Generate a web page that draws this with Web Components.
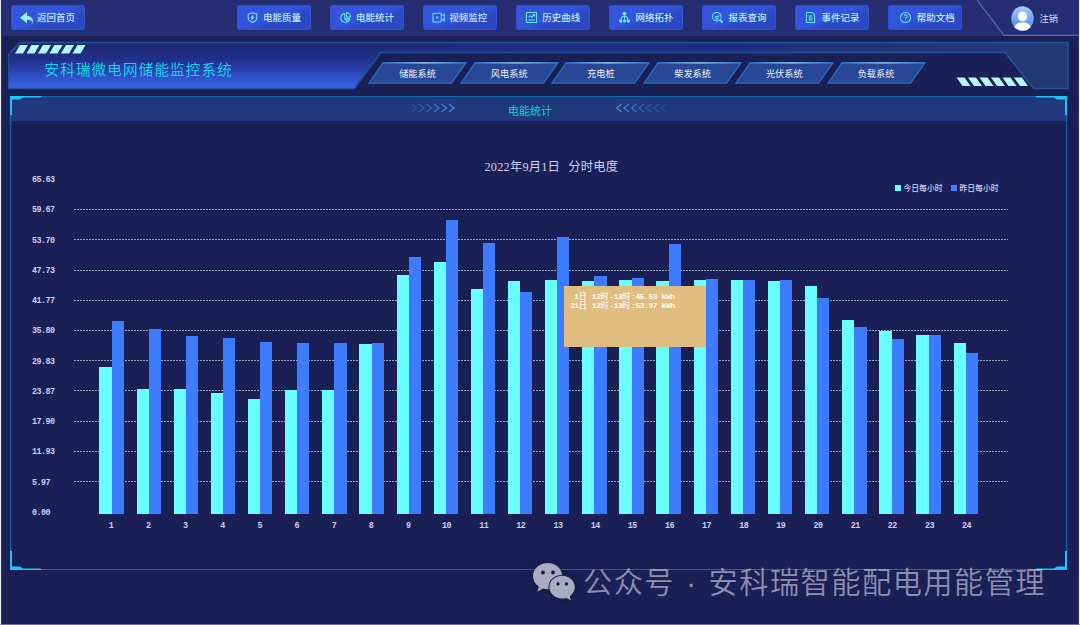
<!DOCTYPE html>
<html lang="zh-CN">
<head>
<meta charset="utf-8">
<title>安科瑞微电网储能监控系统</title>
<style>
  body {
    margin: 0;
    width: 1080px;
    height: 625px;
    overflow: hidden;
    background: #1a2055;
    font-family: "Noto Sans CJK SC", sans-serif;
    color: #fff;
  }
</style>
</head>
<body>
<monitor-app></monitor-app>
<script>
const html = String.raw;

const ICONS = {
  back: `<path d="M6.5 1 0 6.3l6.5 5V8.1c3 0 5 .8 5.3 3.9C13 7.5 10.500 4.500 6.500 4.300z" fill="#8ff4ff" stroke="none"/>`,
  shield: `<path d="M6 .8 10.700 2.200v4.200c0 2.500-2 4.100-4.700 5-2.700-.9-4.700-2.500-4.700-5V2.200z"/><path d="M6.800 2.600 3.600 6.500h1.700L4.800 9.600l3.500-4.300H6.300z" fill="#8fe9ff" stroke="none"/>`,
  pie: `<path d="M5.200 1.700A4.800 4.800 0 1 0 10.500 7.500H5.200zM7.100.9v4.500h4.400C11.300 2.600 9.600 1 7.100.9zM5.500 7.300l2.700 3"/>`,
  video: `<rect x="0" y="1.300" width="9" height="9.500" rx=".8"/><path d="M9 4.500 12.300 2.600v7L9 7.700"/><path d="M3.700 4.300v3.400l2.700-1.700z" fill="#6deaff" stroke="none"/>`,
  curve: `<rect x=".5" y=".5" width="11" height="11" rx=".5"/><path d="m2.700 6 2-2 1.600 1.700L9.300 3M9.400 5V2.900H7.200M2.800 8.700h6.500"/>`,
  topo: `<path d="M6 3v6M6 4.500C3 4.800 2.300 6.500 2.200 9M6 4.500c3 .3 3.700 2 3.800 4.500"/><g fill="#6deaff" stroke="none"><circle cx="6" cy="1.800" r="2"/><circle cx="1.900" cy="9.800" r="1.900"/><circle cx="6" cy="9.800" r="1.700"/><circle cx="10.100" cy="9.800" r="1.900"/></g>`,
  search: `<circle cx="5.300" cy="5.200" r="4.700"/><path d="m8.600 8.500 3 3" stroke-width="1.900"/><path d="m2.900 6.300 1.600-1.800 1.300 1.200 2-2M3.500 7.500h3.600"/>`,
  record: `<path d="M1.600.5h6.300L10.500 3.100v8.400H1.600zM3.900 4.300h4M3.900 6.500h4.400M3.900 8.700h4.400"/>`,
  help: `<circle cx="6" cy="6" r="5.500"/><path d="M4.300 4.800C4.300 2.400 7.800 2.500 7.800 4.500 7.800 5.900 6 5.800 6 7.400M6 8.300v1.100"/>`,
};

class NavButton extends HTMLElement {
  constructor() {
    super();
    this.attachShadow({ mode: "open" });
    const icon = this.getAttribute("icon");
    const size = icon === "back" ? 13 : 11;
    this.shadowRoot.innerHTML = html`
      <style>
        :host {
          display: flex;
          align-items: center;
          box-sizing: border-box;
          width: 74px;
          height: 25px;
          padding-left: 9px;
          gap: 5.500px;
          border: 1px solid #3450cb;
          border-radius: 2px;
          background: linear-gradient(160deg, #3355dc 0 47%, #2b49c2 64%);
          color: #b9e9ff;
          font-size: 9.500px;
          font-weight: 500;
          line-height: 14px;
          white-space: nowrap;
        }
        :host([icon="back"]) { padding-left: 8px; gap: 4px; }
        svg { flex: none; overflow: visible; fill: none; stroke: #6deaff; stroke-width: 1.100; }
        span { margin-top: -1px; }
      </style>
      <svg width="${size}" height="${size}" viewBox="0 0 12 12">${ICONS[icon]}</svg>
      <span><slot></slot></span>
    `;
  }
}
customElements.define("nav-button", NavButton);

class TopBar extends HTMLElement {
  constructor() {
    super();
    this.attachShadow({ mode: "open" });
    this.shadowRoot.innerHTML = html`
      <style>
        :host {
          display: flex;
          box-sizing: border-box;
          height: 36px;
          padding: 5px 0 0 10px;
          background: #252e72;
        }
        nav { display: flex; gap: 19.100px; margin-left: 151.500px; }
        nav-button[icon="help"] { padding-left: 11px; }
        .user {
          display: grid;
          width: 102px;
          height: 36px;
          margin: -5px 0 0 auto;
        }
        .user > * { grid-area: 1 / 1; }
        .info {
          display: flex;
          align-items: center;
          gap: 5.500px;
          padding: 1px 0 0 34px;
          font-size: 9.300px;
          color: #d8dcf2;
        }
        .info span { margin-top: -1px; }
      </style>
      <nav-button icon="back">返回首页</nav-button>
      <nav>
        <nav-button icon="shield">电能质量</nav-button>
        <nav-button icon="pie">电能统计</nav-button>
        <nav-button icon="video">视频监控</nav-button>
        <nav-button icon="curve">历史曲线</nav-button>
        <nav-button icon="topo">网络拓扑</nav-button>
        <nav-button icon="search">报表查询</nav-button>
        <nav-button icon="record">事件记录</nav-button>
        <nav-button icon="help">帮助文档</nav-button>
      </nav>
      <div class="user">
        <svg width="102" height="36" fill="none" stroke="#4a6fb4" stroke-width="1.200"><path d="M0 0 27 35.400H102"/></svg>
        <div class="info">
          <svg width="23" height="25" viewBox="0 0 23 25">
            <defs>
              <linearGradient id="a" x2="0" y2="1"><stop stop-color="#a5cdfb"/><stop offset="1" stop-color="#4b80ed"/></linearGradient>
              <clipPath id="c"><ellipse cx="11.500" cy="12.500" rx="11.200" ry="12.200"/></clipPath>
            </defs>
            <g clip-path="url(#c)">
              <path fill="url(#a)" d="M0 0h23v25H0z"/>
              <ellipse cx="11.500" cy="10.500" rx="4.600" ry="5" fill="#fff"/>
              <path d="M2.500 25c0-5 2.500-7.500 6.500-8.500h5c4 1 6.500 3.500 6.500 8.500z" fill="#fff"/>
            </g>
          </svg>
          <span>注销</span>
        </div>
      </div>
    `;
  }
}
customElements.define("top-bar", TopBar);

class SystemTab extends HTMLElement {
  constructor() {
    super();
    this.attachShadow({ mode: "open" });
    this.shadowRoot.innerHTML = html`
      <style>
        :host { display: grid; width: 99px; height: 22px; }
        svg, span { grid-area: 1 / 1; }
        span {
          place-self: center;
          margin-top: -1px;
          font-size: 9.200px;
          line-height: 14px;
          color: #eef1fd;
        }
      </style>
      <svg width="99" height="22">
        <defs>
          <linearGradient id="top"><stop stop-color="#2d74c4"/><stop offset=".5" stop-color="#a4cdf2"/><stop offset="1" stop-color="#2d74c4"/></linearGradient>
        </defs>
        <path d="M15 .8H98L83.500 21.200H1z" fill="#264896" stroke="#2b70bd" stroke-width="1.300"/>
        <path d="M15 .2H98V1.500H15z" fill="url(#top)"/>
      </svg>
      <span><slot></slot></span>
    `;
  }
}
customElements.define("system-tab", SystemTab);

class SystemHeader extends HTMLElement {
  constructor() {
    super();
    this.attachShadow({ mode: "open" });
    const slants = (x, y, top, bottom) =>
      Array.from({ length: 6 }, (_, i) => {
        const l = x + i * 11.5;
        return `M${l + top} ${y}h8L${l + bottom + 8} ${y + 8.5}h-8z`;
      }).join("");
    this.shadowRoot.innerHTML = html`
      <style>
        :host { display: grid; width: 1062px; height: 49px; margin: 5px 0 0 6px; }
        .frame, .row { grid-area: 1 / 1; }
        .row { display: flex; }
        h1 {
          width: 323.500px;
          margin: 16px 0 0 36.500px;
          font-size: 14.500px;
          font-weight: 350;
          line-height: 24px;
          letter-spacing: 1.200px;
          color: #12dcf3;
          white-space: nowrap;
        }
        .tabs { display: flex; padding-top: 21px; }
        system-tab { margin-right: -7.300px; }
      </style>
      <svg class="frame" width="1062" height="49">
        <defs>
          <linearGradient id="v" x2="0" y2="1"><stop stop-color="#1e2870"/><stop offset=".4" stop-color="#20318e"/><stop offset="1" stop-color="#3a66ee"/></linearGradient>
          <linearGradient id="h" gradientUnits="userSpaceOnUse" x1="370" x2="1040" y1="0" y2="0"><stop stop-color="#1d2c84" stop-opacity="0"/><stop offset=".5" stop-color="#1e2c82"/><stop offset=".75" stop-color="#213372"/><stop offset="1" stop-color="#233a74"/></linearGradient>
        </defs>
        <path d="M.5 13.500 12 1.500H1060V47.500H1025.500L997 11.500H372.500L346.500 47.500H.5z" fill="url(#v)"/>
        <path d="M.5 13.500 12 1.500H1060V47.500H1025.500L997 11.500H372.500L346.500 47.500H.5z" fill="url(#h)" stroke="#225398" stroke-width="1.500"/>
        <path d="${slants(7, 4, 5, 0)}${slants(948.5, 36.5, 0, 6)}" fill="#b3f8ff"/>
      </svg>
      <div class="row">
        <h1>安科瑞微电网储能监控系统</h1>
        <div class="tabs">
          <system-tab>储能系统</system-tab>
          <system-tab>风电系统</system-tab>
          <system-tab>充电桩</system-tab>
          <system-tab>柴发系统</system-tab>
          <system-tab>光伏系统</system-tab>
          <system-tab>负载系统</system-tab>
        </div>
      </div>
    `;
  }
}
customElements.define("system-header", SystemHeader);

class FramePanel extends HTMLElement {
  constructor() {
    super();
    this.attachShadow({ mode: "open" });
    const chevrons = (count, dir) =>
      Array.from({ length: count }, (_, i) => {
        const x = i * 7.5 + 0.5;
        const d = dir > 0 ? `M${x} 1l5 4-5 4` : `M${x + 5} 1l-5 4 5 4`;
        const strength = dir > 0 ? (i + 2) / (count + 1) : (count - i) / count;
        return `<path d="${d}" opacity="${strength}"/>`;
      }).join("");
    this.shadowRoot.innerHTML = html`
      <style>
        :host {
          display: block;
          position: relative;
          box-sizing: border-box;
          width: 1057px;
          height: 474px;
          margin: 6px 0 0 8px;
          border: 1px solid #1767a3;
        }
        header {
          display: grid;
          grid-template-columns: 400px 50px 138px 69px;
          height: 24px;
          background: #1f397c;
        }
        header svg { margin-top: 6px; fill: none; stroke: #3e88dd; stroke-width: 1.500; }
        h2 {
          margin: 4px 0 0 0;
          font-size: 11px;
          font-weight: 400;
          line-height: 18px;
          text-align: center;
          color: #10d0df;
        }
        .corner { position: absolute; fill: #1cc6fa; }
        .tl { left: -1px; top: -1px; }
        .tr { right: -1px; top: -1px; transform: scaleX(-1); }
        .bl { left: -1px; bottom: -1px; transform: scaleY(-1); }
        .br { right: -1px; bottom: -1px; transform: scale(-1); }
      </style>
      <header>
        <i></i>
        <svg width="48" height="10">${chevrons(6, 1)}</svg>
        <h2><slot name="title"></slot></h2>
        <svg width="54" height="10" style="margin-left:17px">${chevrons(7, -1)}</svg>
      </header>
      <slot></slot>
      ${["tl", "tr", "bl", "br"]
        .map((c) => `<svg class="corner ${c}" width="34" height="20"><path d="M0 0H32L30.500 1.500H13L10 3.500H2V19H0z"/></svg>`)
        .join("")}
    `;
  }
}
customElements.define("frame-panel", FramePanel);

// hourly kWh
const TODAY = [
  28.65, 24.3, 24.3, 23.52, 22.3, 24.1, 24.16, 33.05, 46.52, 49.2, 43.79, 45.45,
  45.53, 45.45, 45.59, 45.35, 45.59, 45.59, 45.35, 44.47, 37.77, 35.74, 34.94, 33.34,
];
const YESTERDAY = [
  37.64, 36.02, 34.71, 34.26, 33.44, 33.28, 33.28, 33.24, 50.18, 57.27, 52.81, 43.2,
  53.97, 46.37, 45.98, 52.68, 45.84, 45.59, 45.68, 42.13, 36.47, 34.12, 34.86, 31.39,
];
const TICKS = ["65.63", "59.67", "53.70", "47.73", "41.77", "35.80", "29.83", "23.87", "17.90", "11.93", "5.97", "0.00"];
const PX_PER_KWH = 5.12;

class HourlyChart extends HTMLElement {
  constructor() {
    super();
    this.attachShadow({ mode: "open" });
    const groups = TODAY.map(
      (v, i) => html`<div class="group"><i style="height:${v * PX_PER_KWH}px"></i><i class="old" style="height:${YESTERDAY[i] * PX_PER_KWH}px"></i></div>`
    ).join("");
    this.shadowRoot.innerHTML = html`
      <style>
        :host { display: block; color: #d0cff2; }
        h3 {
          margin: 0;
          padding: 37px 0 0 473.500px;
          font: 400 12.300px/18px "Liberation Serif", "Noto Sans CJK SC", serif;
          letter-spacing: .2px;
          word-spacing: 5px;
        }
        .legend {
          display: flex;
          align-items: center;
          height: 12px;
          margin: 6px 0 0 883.500px;
          font-size: 7.800px;
          line-height: 12px;
          font-weight: 500;
        }
        .legend i { width: 6px; height: 6px; margin-right: 3px; background: #69ffff; }
        .legend span { width: 47px; white-space: nowrap; }
        .legend .old { background: #3d7bff; }
        .body { display: grid; grid-template-columns: 42px 934px; margin: -19px 0 0 21px; }
        .ticks, .hours { font: 700 8.400px/10px "Liberation Mono", monospace; letter-spacing: -.52px; }
        .ticks { height: 339px; }
        .ticks div { height: 30.250px; }
        .plot {
          position: relative;
          display: grid;
          height: 338.500px;
        }
        .lines, .bars { grid-area: 1 / 1; }
        .lines { padding-top: 5px; }
        .lines div {
          height: 30.200px;
          background: repeating-linear-gradient(90deg, #8baabd 0 2px, transparent 2px 3px) bottom / 100% 1px no-repeat;
        }
        .bars, .hours { display: flex; margin-left: 19px; width: 891.200px; }
        .bars { align-items: flex-end; }
        .group { flex: 1; display: flex; align-items: flex-end; justify-content: center; }
        .group i { width: 12.200px; background: #69ffff; }
        .group .old { background: #3d7bff; }
        .hours { grid-column: 2; margin-top: 6.500px; }
        .hours div { flex: 1; text-align: center; text-indent: 1.500px; }
        .hours div:nth-child(-n+9) { text-indent: -1px; }
        .tip {
          position: absolute;
          left: 490px;
          top: 111px;
          box-sizing: border-box;
          width: 142px;
          height: 61px;
          padding: 6px 0 0 6px;
          background: #dfbc80;
          color: #fffaf0;
          font: 700 8px/9.400px "Liberation Mono", "Noto Sans CJK SC", monospace;
          letter-spacing: -.44px;
          white-space: pre;
        }
        .tip div { height: 9.400px; }
        .tip b { font-size: 8px; font-weight: 500; line-height: 1; letter-spacing: .7px; }
      </style>
      <h3>2022年9月1日 分时电度</h3>
      <div class="legend">
        <i></i><span>今日每小时</span><i class="old"></i><span>昨日每小时</span>
      </div>
      <div class="body">
        <div class="ticks">${TICKS.map((t) => `<div>${t}</div>`).join("")}</div>
        <div class="plot">
          <div class="lines">${"<div></div>".repeat(10)}</div>
          <div class="bars">${groups}</div>
          <div class="tip"><div> 1<b>日</b> 12<b>时</b>-13<b>时</b>:45.53 kWh</div><div>31<b>日</b> 12<b>时</b>-13<b>时</b>:53.97 kWh</div></div>
        </div>
        <div class="hours">${TODAY.map((_, i) => `<div>${i + 1}</div>`).join("")}</div>
      </div>
    `;
  }
}
customElements.define("hourly-chart", HourlyChart);

class AccountMark extends HTMLElement {
  constructor() {
    super();
    this.attachShadow({ mode: "open" });
    this.shadowRoot.innerHTML = html`
      <style>
        :host {
          display: flex;
          align-items: center;
          gap: 8px;
          height: 40px;
          font: 350 29.200px/40px "Liberation Sans", "Noto Sans CJK SC", sans-serif;
          letter-spacing: 1.500px;
          word-spacing: 1.500px;
          color: rgba(218, 220, 235, .6);
          white-space: nowrap;
        }
        svg { flex: none; filter: drop-shadow(0 0 5px rgba(10, 12, 35, .5)); }
        span { margin-top: 3px; }
      </style>
      <svg width="42" height="37" viewBox="0 0 42 37" fill="#a9abc1">
        <path fill-rule="evenodd" d="M15 0C6.500 0 0 5.700 0 13c0 4.300 2.200 8 5.800 10.500L4.500 28.500l5.600-2.900c1.700.5 3.500.7 5.500.6C14.500 18.500 20 12 29.200 11.700 28 5 22.500 0 15 0zM10 7.600a1.900 1.900 0 1 1 0 3.800 1.900 1.900 0 0 1 0-3.800zM20 7.600a1.900 1.900 0 1 1 0 3.800 1.900 1.900 0 0 1 0-3.800z"/>
        <path fill-rule="evenodd" d="M29 12.800c-7.200 0-12.600 5-12.600 11.300S22 35.600 29 35.600c1.600 0 3-.2 4.400-.7L38 37.300l-1.200-4.100c3-2.200 5-5.300 5-9.100 0-6.300-5.600-11.300-12.800-11.300zM25 19.300a1.600 1.600 0 1 1 0 3.200 1.600 1.600 0 0 1 0-3.200zM33.500 19.300a1.600 1.600 0 1 1 0 3.200 1.600 1.600 0 0 1 0-3.200z"/>
      </svg>
      <span><slot></slot></span>
    `;
  }
}
customElements.define("account-mark", AccountMark);

class MonitorApp extends HTMLElement {
  constructor() {
    super();
    this.attachShadow({ mode: "open" });
    this.shadowRoot.innerHTML = html`
      <style>
        :host {
          display: block;
          position: relative;
          box-sizing: border-box;
          width: 1080px;
          height: 625px;
          border-left: 1px solid #e7e9f3;
          border-right: 1px solid #e7e9f3;
          border-bottom: 1px solid #6b7099;
        }
        main {
          display: flow-root;
          box-sizing: border-box;
          height: 624px;
          padding-left: 1px;
          box-shadow: inset 1px 0 #2b3366, inset -1px 0 #2b3366;
        }
        top-bar { margin-left: -1px; }
        account-mark { position: absolute; left: 532px; top: 561px; }
      </style>
      <main>
        <top-bar></top-bar>
        <system-header></system-header>
        <frame-panel>
          <span slot="title">电能统计</span>
          <hourly-chart></hourly-chart>
        </frame-panel>
      </main>
      <account-mark>公众号 · 安科瑞智能配电用能管理</account-mark>
    `;
  }
}
customElements.define("monitor-app", MonitorApp);
</script>
</body>
</html>
